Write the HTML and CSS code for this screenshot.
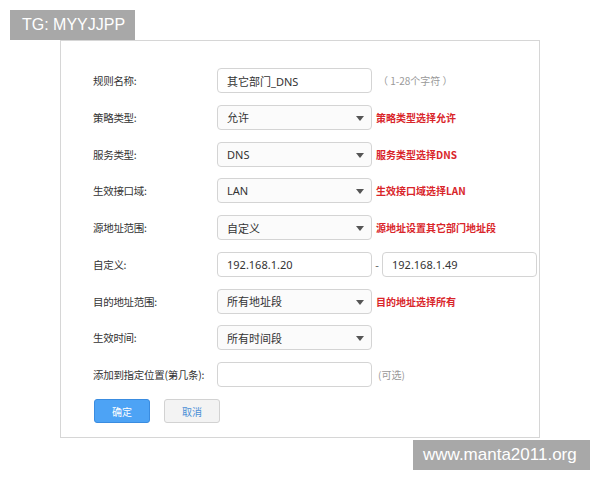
FILE: index.html
```html
<!DOCTYPE html>
<html>
<head>
  <meta charset="utf-8">
  <title>ACL 规则</title>
  <link rel="stylesheet" href="styles.css">
</head>
<body>
  <div class="tag tag-top">TG: MYYJJPP</div>

  <div class="panel">
    <div class="form">
      <label class="label">规则名称:</label>
      <div class="line">
        <input class="field" type="text" value="其它部门_DNS">
        <span class="tip">（ 1-28个字符 ）</span>
      </div>

      <label class="label">策略类型:</label>
      <div class="line">
        <div class="select"><span>允许</span><i class="caret"></i></div>
        <span class="note">策略类型选择允许</span>
      </div>

      <label class="label">服务类型:</label>
      <div class="line">
        <div class="select"><span>DNS</span><i class="caret"></i></div>
        <span class="note">服务类型选择DNS</span>
      </div>

      <label class="label">生效接口域:</label>
      <div class="line">
        <div class="select"><span>LAN</span><i class="caret"></i></div>
        <span class="note">生效接口域选择LAN</span>
      </div>

      <label class="label">源地址范围:</label>
      <div class="line">
        <div class="select"><span>自定义</span><i class="caret"></i></div>
        <span class="note">源地址设置其它部门地址段</span>
      </div>

      <label class="label">自定义:</label>
      <div class="line">
        <input class="field" type="text" value="192.168.1.20">
        <span class="dash">-</span>
        <input class="field" type="text" value="192.168.1.49">
      </div>

      <label class="label">目的地址范围:</label>
      <div class="line">
        <div class="select"><span>所有地址段</span><i class="caret"></i></div>
        <span class="note">目的地址选择所有</span>
      </div>

      <label class="label">生效时间:</label>
      <div class="line">
        <div class="select"><span>所有时间段</span><i class="caret"></i></div>
      </div>

      <label class="label">添加到指定位置(第几条):</label>
      <div class="line">
        <input class="field" type="text" value="">
        <span class="tip tip-opt">(可选)</span>
      </div>
    </div>

    <div class="buttons">
      <button class="btn btn-ok">确定</button>
      <button class="btn btn-cancel">取消</button>
    </div>
  </div>

  <div class="tag tag-bottom">www.manta2011.org</div>
</body>
</html>
```

FILE: styles.css
```css
body {
  margin: 0;
  background-color: #fff;
  font-family: "Noto Sans", "Noto Sans CJK SC", sans-serif;
  color: #333;
}

.tag {
  position: absolute;
  background-color: #a8a8a8;
  color: #fff;
  font-family: "Liberation Sans", Arial, sans-serif;
  font-size: 16px;
  height: 30px;
  line-height: 30px;
  box-sizing: border-box;
}

.tag-top {
  left: 10px;
  top: 10px;
  width: 125px;
  padding-left: 12px;
}

.tag-bottom {
  left: 413px;
  top: 440px;
  width: 177px;
  padding-left: 10px;
  font-size: 17px;
}

.panel {
  margin: 40px 0 0 60px;
  width: 480px;
  height: 398px;
  box-sizing: border-box;
  border: 1px solid #d6d6d6;
  padding: 27px 0 0 32px;
}

.form {
  display: grid;
  grid-template-columns: 124px auto;
  grid-auto-rows: 25px;
  row-gap: 11.75px;
  align-items: center;
}

.label {
  font-family: "Noto Sans CJK SC", sans-serif;
  font-size: 10.5px;
  letter-spacing: -0.3px;
  color: #333;
  white-space: nowrap;
}

.line {
  display: flex;
  align-items: center;
  height: 25px;
}

.field,
.select {
  width: 155px;
  height: 25px;
  box-sizing: border-box;
  border: 1px solid #d4d4d4;
  border-radius: 4px;
  background-color: #fff;
  padding: 0 9px;
  font-family: "Noto Sans", "Noto Sans CJK SC", sans-serif;
  font-size: 11px;
  color: #333;
  outline: none;
}

.select {
  position: relative;
  display: flex;
  align-items: center;
  background-color: #fbfbfb;
}

.caret {
  position: absolute;
  right: 7px;
  top: 10px;
  width: 0;
  height: 0;
  border-left: 4px solid transparent;
  border-right: 4px solid transparent;
  border-top: 5px solid #555;
}

.note {
  margin-left: 4px;
  font-family: "Noto Sans CJK SC", sans-serif;
  font-size: 10px;
  font-weight: bold;
  color: #d9252a;
}

.tip {
  margin-left: 6px;
  font-family: "Noto Sans CJK SC", sans-serif;
  font-size: 10px;
  color: #999;
  white-space: pre;
}

.tip-opt {
  margin-left: 6px;
}

.dash {
  width: 10px;
  text-align: center;
  font-size: 11px;
  color: #666;
}

.buttons {
  display: flex;
  gap: 14px;
  margin-top: 12px;
  margin-left: 1px;
}

.btn {
  width: 56px;
  height: 24px;
  border-radius: 3px;
  font-family: "Noto Sans CJK SC", sans-serif;
  font-size: 10px;
  cursor: pointer;
}

.btn-ok {
  background-color: #4da3f5;
  border: 1px solid #3a8ce0;
  color: #fff;
}

.btn-cancel {
  background-color: #f3f3f3;
  border: 1px solid #d2d2d2;
  color: #4b8fd6;
}
```
